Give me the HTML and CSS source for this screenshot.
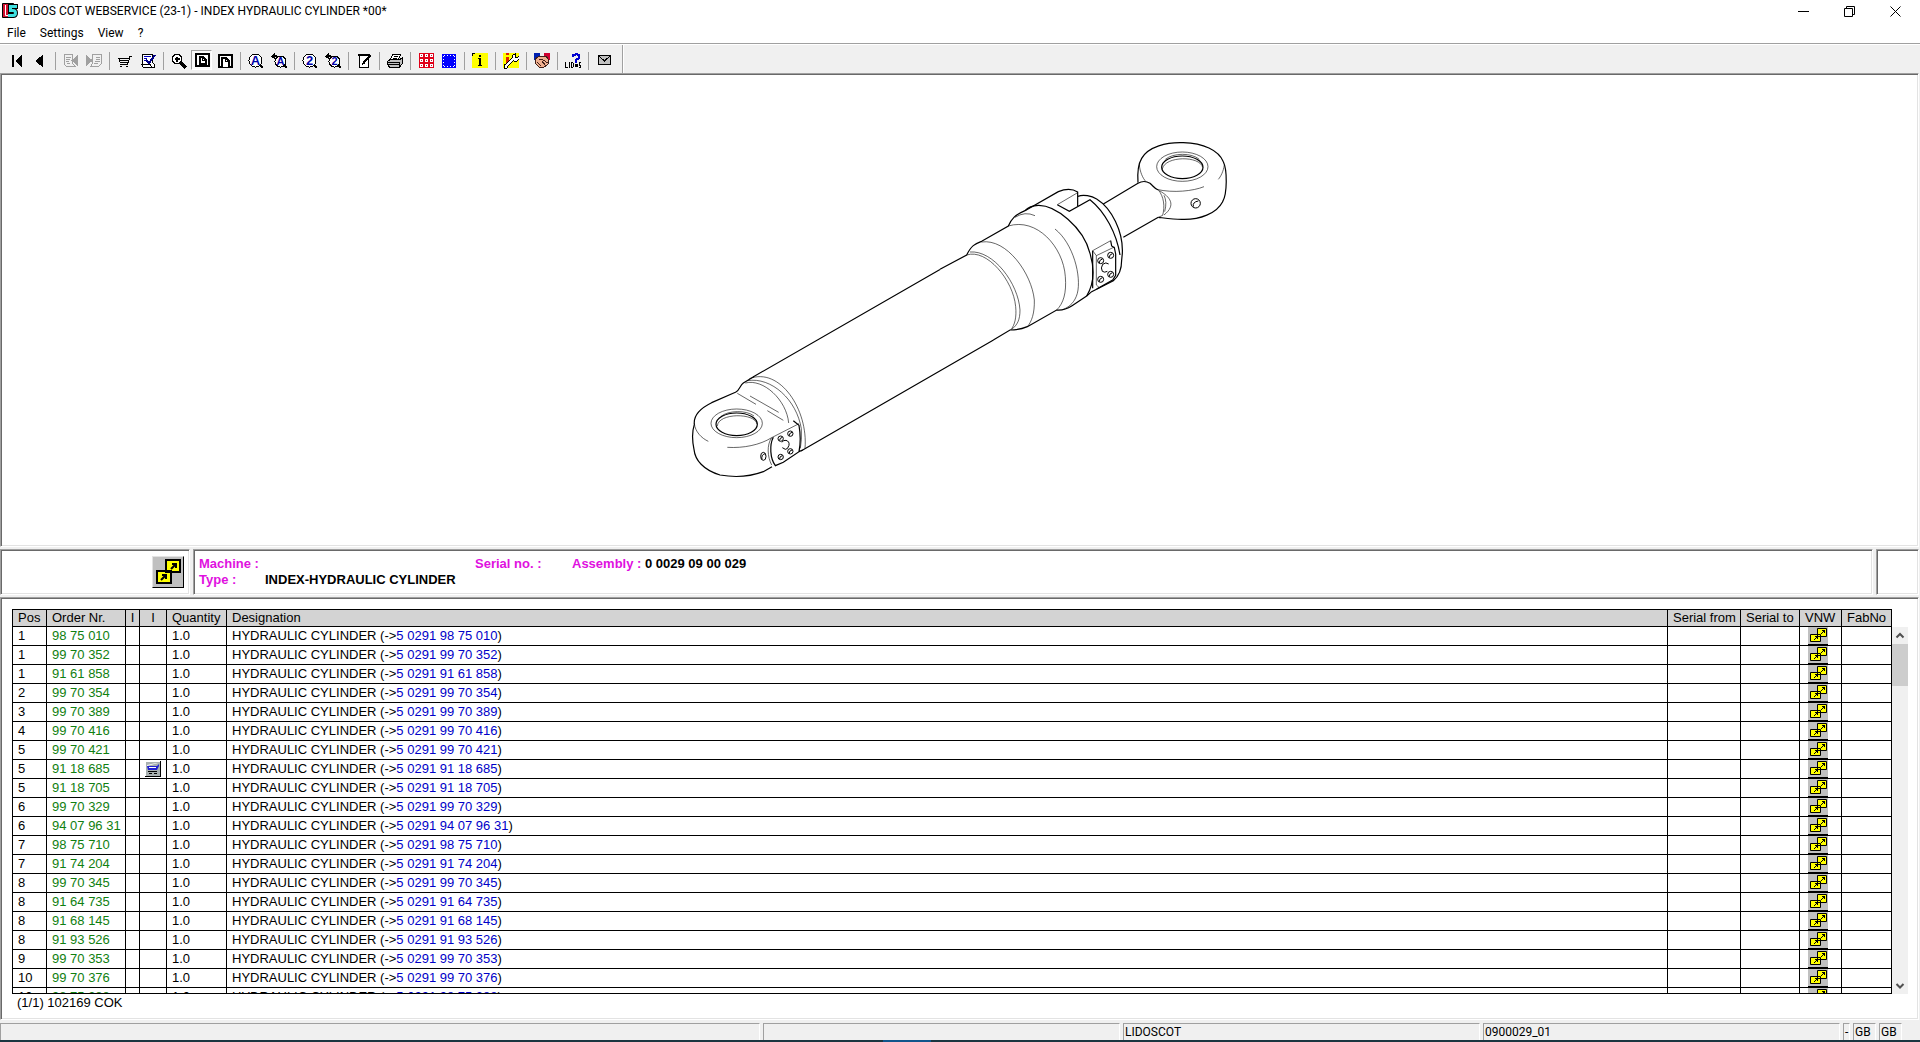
FILE: index.html
```html
<!DOCTYPE html>
<html lang="en">
<head>
  <meta charset="UTF-8" />
  <meta name="viewport" content="width=device-width, initial-scale=1" />
  <title>LIDOS COT WEBSERVICE</title>
  <link rel="stylesheet" href="styles.css">
</head>
<body>
  <!-- Shared symbols -->
  <svg class="symbols" aria-hidden="true">
    <symbol id="link" viewBox="0 0 20 18">
      <path fill="#c0c0c0" d="M0 0h20v17H0z"/>
      <path d="M0 17h20v1H0z"/>
      <path fill="#ff0" stroke="#000" d="M9.500 1.500h9v8h-9zM2.500 7.500h10v7h-10z"/>
      <path d="M14 3h3v3h-1V5h-1v1h-1v1h-1V6h1V5h1V4h-1zM7 9h3v3H9v-1H8v1H7v1H6v-1h1v-1h1v-1H7z"/>
    </symbol>
  </svg>

  <header class="titlebar">
    <svg class="app-icon" viewBox="0 0 16 16">
      <path fill="#d01030" stroke="#000" d="M.5.5h11v14H.5z"/>
      <path fill="none" stroke="#fff" stroke-width="1" d="M3.500 2v10.500H6"/>
      <path fill="none" stroke="#000" stroke-width="5" d="M16 3.500H8.500V7.500H11q2.500 0 2.500 2.500t-2.500 2.500H6"/>
      <path fill="none" stroke="#40e0e0" stroke-width="3" d="M15 3.500H8.500V7.500H11q2.500 0 2.500 2.500t-2.500 2.500H6"/>
    </svg>
    <h1 class="title">LIDOS COT WEBSERVICE (23-1) - INDEX HYDRAULIC CYLINDER *00*</h1>
    <div class="window-buttons">
      <button aria-label="Minimize"><svg viewBox="0 0 11 11"><path d="M0 5.500h11"/></svg></button>
      <button aria-label="Restore"><svg viewBox="0 0 11 11"><path d="M.5 2.500h8v8h-8zM2.500 2.500v-2h8v8h-2"/></svg></button>
      <button aria-label="Close"><svg viewBox="0 0 11 11"><path d="M.5.5l10 10M10.500.5l-10 10"/></svg></button>
    </div>
  </header>

  <nav class="menu">
    <button>File</button>
    <button>Settings</button>
    <button>View</button>
    <button>?</button>
  </nav>

  <div class="toolbar">
    <button aria-label="First"><svg viewBox="0 0 16 16"><path d="M3 2h2v12H3zM13 2v12L6 8z"/></svg></button>
    <button aria-label="Back"><svg viewBox="0 0 16 16"><path d="M10.500 2v12L3 8z"/></svg></button>
    <span class="sep"></span>
    <button aria-label="Previous page" disabled><svg viewBox="0 0 16 16"><path fill="none" stroke="#a0a0a0" d="M1.500 1.500h8v9l3 3h-9l-2-2zM3 4.500h5M3 6.500h4M3 8.500h3M4 10.500h3"/><path fill="#a0a0a0" d="M15 2v11L8 7.500z"/></svg></button>
    <button aria-label="Next page" disabled><svg viewBox="0 0 16 16"><path fill="none" stroke="#a0a0a0" d="M6.500 1.500h9v9l-3 3h-8l2-3zM10 4.500h4M10 6.500h4M9 8.500h5M8 10.500h4"/><path fill="#a0a0a0" d="M0 2v11l7-5.500z"/></svg></button>
    <span class="sep"></span>
    <button aria-label="Basket"><svg viewBox="0 0 16 16"><path fill="none" stroke="#000" d="M15 3.500h-2L10.500 11.500H3M1 5.500h11M2 7.500h9.500M3 9.500h8M1.500 5l2 5"/><path d="M3 13h2v1H3zM9 13h2v1H9z"/></svg></button>
    <button aria-label="Order list"><svg viewBox="0 0 16 16"><path fill="#fff" stroke="#000" d="M2.500 1.500h10v8l2 2v3h-11l-2-3h1z"/><path stroke="#00b" d="M4 3.500h7M4 5.500h3M4 7.500h2"/><path fill="none" stroke="#000088" stroke-width="2" d="M6 7l3 3 6-8"/><path fill="none" stroke="#000" d="M2 11.500h8l2 3"/></svg></button>
    <span class="sep"></span>
    <button aria-label="Zoom in"><svg viewBox="0 0 16 16"><circle cx="6" cy="6" r="4.500" fill="#fff" stroke="#000" stroke-width="1.500"/><path fill="none" stroke="#000" stroke-width="1.500" d="M3.500 6h5M6 3.500v5"/><path stroke="#000" stroke-width="3" d="M10 10l5 5"/></svg></button>
    <button class="pressed" aria-label="Whole page"><svg viewBox="0 0 16 16"><path fill="#fff" stroke="#000" stroke-width="2" d="M2 2h13v12H2z"/><path fill="#fff" stroke="#000" stroke-width="2" d="M6 5h3l3 3v4H6z"/><path fill="none" stroke="#000" d="M8.500 5v3.500H12"/></svg></button>
    <button aria-label="Page width"><svg viewBox="0 0 16 16"><path fill="#fff" stroke="#000" stroke-width="2" d="M2 2h13v12H2z"/><path fill="#fff" stroke="#000" stroke-width="2" d="M5 14V5h4l3 3v6"/><path fill="none" stroke="#000" d="M8.500 5v3.500H12"/></svg></button>
    <span class="sep"></span>
    <button aria-label="Search text"><svg viewBox="0 0 16 16"><circle cx="7.500" cy="7.500" r="6.500" fill="#fff" stroke="#000"/><path stroke="#000" stroke-width="2" d="M12 12l3 3"/><text x="7.500" y="12" font-size="13">A</text></svg></button>
    <button aria-label="Search text again"><svg viewBox="0 0 16 16"><circle cx="9.500" cy="8.500" r="5.500" fill="#fff" stroke="#000"/><path stroke="#000" stroke-width="2" d="M13 12l3 3"/><path d="M0 3.500L3.500 0v2H5l2 2-1 1-2-1v2.500z"/><text x="9.500" y="12" font-size="11">A</text></svg></button>
    <span class="sep"></span>
    <button aria-label="Search number"><svg viewBox="0 0 16 16"><circle cx="7.500" cy="7.500" r="6.500" fill="#fff" stroke="#000"/><path stroke="#000" stroke-width="2" d="M12 12l3 3"/><text x="7.500" y="12" font-size="13">2</text></svg></button>
    <button aria-label="Search number again"><svg viewBox="0 0 16 16"><circle cx="9.500" cy="8.500" r="5.500" fill="#fff" stroke="#000"/><path stroke="#000" stroke-width="2" d="M13 12l3 3"/><path d="M0 3.500L3.500 0v2H5l2 2-1 1-2-1v2.500z"/><text x="9.500" y="12" font-size="11">2</text></svg></button>
    <span class="sep"></span>
    <button aria-label="Note"><svg viewBox="0 0 16 16"><path fill="#fff" stroke="#000" d="M3.500 2.500h9v12h-9z"/><path d="M2 1h12v2H2z"/><path fill="none" stroke="#000" stroke-width="2" d="M14.500 2.500L8 9.500"/><path d="M6 12l1-4 2.500 2z"/></svg></button>
    <span class="sep"></span>
    <button aria-label="Print"><svg viewBox="0 0 16 16"><path fill="#fff" stroke="#000" d="M5.500 1.500h8l-2 5h-8z"/><path stroke="#000" d="M7 3.500h4M6 5.500h4"/><path fill="#c0c0c0" stroke="#000" d="M3 6.500h10l2.500-2v6l-3 3.500h-10l-2-2.500v-3z"/><path stroke="#000" d="M1 9.500h11.500M1 11.500h11.500M12.500 9v5"/></svg></button>
    <span class="sep"></span>
    <button aria-label="Grid"><svg viewBox="0 0 16 16"><path fill="#e00018" d="M1 0h15v15H1z"/><path fill="#fff" d="M2 1h3v3H2zM7 1h3v3H7zM12 1h3v3h-3zM2 6h3v3H2zM7 6h3v3H7zM12 6h3v3h-3zM2 11h3v3H2zM7 11h3v3H7zM12 11h3v3h-3z"/><path fill="#a03040" d="M3 2h1v1H3zM8 2h1v1H8zM13 2h1v1h-1zM3 7h1v1H3zM8 7h1v1H8zM13 7h1v1h-1zM3 12h1v1H3zM8 12h1v1H8zM13 12h1v1h-1z"/></svg></button>
    <button aria-label="Select"><svg viewBox="0 0 16 16"><path fill="#00f" d="M1 1h14v14H1z"/><path fill="none" stroke="#fff" stroke-dasharray="1 2" d="M3 2.500h11M3 13.500h11M2.500 3v11M13.500 3v11"/></svg></button>
    <span class="sep"></span>
    <button aria-label="Information"><svg viewBox="0 0 16 16"><path fill="#ff0" d="M0 0h16v15H0z"/><path d="M0 0h3v1H1v2H0zM7 2h2v2H7zM6 5h3v7h1v1H6v-1h1V6H6z"/></svg></button>
    <span class="sep"></span>
    <button aria-label="Service"><svg viewBox="0 0 16 16"><path fill="#ff0" d="M0 0h16v15H0z"/><path fill="#e02000" d="M3 0h3v2H3zM3 4h3v7H3z"/><path fill="none" stroke="#000" stroke-width="4" d="M3 13l8-8"/><path fill="#fff" stroke="#000" d="M9 5l1-3 2.500-1v3l1.500 1 2-2v3l-2 2h-3zM1 12l2-1 2 2-1 2H1z"/><path fill="none" stroke="#fff" stroke-width="2" d="M3 13l8-8"/></svg></button>
    <span class="sep"></span>
    <button aria-label="Partner"><svg viewBox="0 0 16 16"><path fill="#0020b0" d="M0 0h6v7H0z"/><path fill="#d00030" d="M10 0h6v7h-6z"/><path fill="#f0b090" stroke="#402018" d="M1 6l5-3 3 1 3-1 3 4-1 4-5 4-4-1-4-4z"/><path fill="none" stroke="#402018" d="M5 6l4 1 5 3M3 9l4 4M8 8l3 4"/></svg></button>
    <span class="sep"></span>
    <button aria-label="LIDOS help"><svg viewBox="0 0 16 16"><path fill="none" stroke="#0000d0" stroke-width="2" d="M8 4V2h2l1-1 3 1v3l-3 2v3"/><path d="M10 11h3v3h-3z"/><path fill="none" stroke="#000" d="M.5 9v5.500H3M4.500 9v6M6.500 9.500h1l1 1v3l-1 1h-1zM16 9.500h-2v2.500h1.500v2.500H14"/></svg></button>
    <span class="sep"></span>
    <button aria-label="Mail"><svg viewBox="0 0 16 16"><path fill="#c0c0c0" stroke="#000" d="M2.500 2.500h12v9h-12z"/><path fill="none" stroke="#000" d="M3 3l5.500 5L14 3"/></svg></button>
    <span class="band-end"></span>
  </div>

  <main class="content">
    <section class="panel drawing">
      <svg class="cylinder" viewBox="690 140 540 340" role="img" aria-label="Hydraulic cylinder">
        <!-- tube -->
        <path class="bold" d="M753 377L940 269.500M801 451L993.500 340"/>
        <!-- bottom eye and port -->
        <g transform="translate(680 360) scale(.33333)">
          <g class="heavy">
            <path d="M221 50L190 69C180 76 178 92 168 96L95 128C60 145 40 165 43 193C36 215 36 240 42 268C45 300 70 330 120 345C165 353 210 350 250 335L276 320"/>
            <path d="M280 232C268 255 270 295 286 317L310 307L357 275C362 250 362 225 357 196L340 182M357 275L368 270"/>
            <ellipse cx="170" cy="193" rx="62" ry="34"/>
          </g>
          <g class="thin">
            <path d="M208 56C300 20 385 150 375 265M202 62C275 50 350 120 364 206Q366 240 361 265M196 69C250 55 320 120 326 189"/>
            <ellipse cx="170" cy="190" rx="77" ry="43"/>
            <path d="M112 198C115 158 225 158 231 192M122 170C145 150 200 150 222 168"/>
            <path d="M172 100L228 133M210 108L296 157M262 152L310 181"/>
            <path d="M142 262C190 265 240 255 275 233L357 191M43 190C45 215 65 235 85 244M275 233C260 255 262 290 275 315"/>
          </g>
          <g class="bolts">
            <ellipse cx="250" cy="289" rx="8" ry="12"/><path d="M246 298Q243 285 255 281"/>
            <circle cx="302" cy="236" r="8"/><circle cx="331" cy="221" r="8"/>
            <circle cx="302" cy="291" r="8"/><circle cx="331" cy="274" r="8"/>
            <path d="M299 242Q298 234 307 232M328 227Q327 219 336 217M299 297Q298 289 307 287M328 280Q327 272 336 270"/>
            <path d="M306 247Q309 240 318 241Q329 244 327 256Q323 269 316 268L307 263"/>
          </g>
        </g>
        <!-- head, rod and rod eye -->
        <g transform="translate(940 130) scale(.33333)">
          <g class="heavy">
            <path d="M0 418L80 375C95 345 105 342 125 334L205 288C215 265 225 255 255 242L355 185C380 175 400 178 413 186L413 228M352 224L388 244L450 209C495 245 530 310 540 375"/>
            <path d="M414 199C430 192 455 198 470 207C515 235 550 305 547 370L545 390C545 425 535 440 520 452L455 485L440 498L395 528C380 538 365 541 350 540L262 590C240 600 225 600 210 600L160 630"/>
            <path d="M255 242C265 231 275 227 295 226C345 225 430 290 450 370C465 420 460 465 440 498"/>
            <path d="M490 222L594 160Q612 149 630 160C640 168 645 178 655 180M550 322L655 262"/>
            <path d="M594 158C592 130 596 100 605 85C625 50 680 36 730 38C790 40 835 60 850 95C862 120 862 190 848 215C830 250 780 270 725 268C700 268 680 265 655 262"/>
            <ellipse cx="727" cy="112" rx="62" ry="34"/>
            <path d="M512 332L515 348L523 353L527 372V436L518 450L470 477M458 362V475"/>
          </g>
          <g class="thin">
            <path d="M352 224L413 188M205 288C290 262 370 350 376 440C380 490 370 520 350 540M345 297C400 340 425 440 412 490C405 515 390 530 370 538M225 262Q255 243 285 257"/>
            <path d="M125 336C200 325 275 430 283 510C284 550 275 575 262 590M80 375C140 355 220 450 227 530C230 560 225 585 212 600M90 366C160 360 235 460 240 540C240 570 232 585 215 598"/>
            <ellipse cx="727" cy="110" rx="77" ry="44"/>
            <path d="M667 117C675 77 780 77 788 112M676 88C700 68 755 68 778 88"/>
            <path d="M650 178C700 190 760 183 792 170M598 105C600 125 608 145 618 155M853 105C850 125 842 140 835 148"/>
            <path d="M655 180C672 200 675 230 668 256L655 262M658 182C690 200 710 225 672 255M672 196Q682 215 674 245"/>
            <path d="M458 362L512 332M458 362L469 377L523 351M469 377V465L478 473"/>
          </g>
          <g class="bolts">
            <circle cx="767" cy="220" r="14"/><path d="M760 230Q757 216 775 213"/>
            <circle cx="482" cy="392" r="9"/><circle cx="512" cy="376" r="9"/>
            <circle cx="482" cy="448" r="9"/><circle cx="512" cy="433" r="9"/>
            <path d="M478 399Q477 390 487 387M508 383Q507 374 517 371M478 455Q477 446 487 443M508 440Q507 431 517 428"/>
            <path d="M506 402Q498 395 488 403Q481 414 487 424Q494 429 502 424"/>
          </g>
        </g>
      </svg>
    </section>

    <section class="info">
      <div class="panel info-nav">
        <button class="jump" aria-label="Go to assembly">
          <svg viewBox="0 0 28 28"><path fill="#ff0" stroke="#000" stroke-width="2" d="M12 2h14v12H12zM3 13h14v12H3z"/><path fill="none" stroke="#000" stroke-width="2" d="M17 11l5-5M18 6h4v4M7 22l5-5M8 17h4v4"/></svg>
        </button>
      </div>
      <div class="panel machine">
        <span class="label">Machine :</span>
        <span></span>
        <span class="label">Serial no. :</span>
        <span><span class="label">Assembly :</span> 0 0029 09 00 029</span>
        <span class="label">Type :</span>
        <span>INDEX-HYDRAULIC CYLINDER</span>
      </div>
      <div class="panel"></div>
    </section>

    <section class="panel list">
      <div class="list-body">
        <div class="table-wrap">
          <table>
            <colgroup>
              <col class="c-pos"><col class="c-order"><col class="c-i"><col class="c-basket"><col class="c-qty"><col>
              <col class="c-from"><col class="c-to"><col class="c-vnw"><col class="c-fab">
            </colgroup>
            <thead>
              <tr><th>Pos</th><th>Order Nr.</th><th class="mid">I</th><th class="mid">I</th><th>Quantity</th><th>Designation</th><th>Serial from</th><th>Serial to</th><th>VNW</th><th>FabNo</th></tr>
            </thead>
            <tbody>
              <tr><td>1</td><td class="order">98 75 010</td><td></td><td></td><td>1.0</td><td>HYDRAULIC CYLINDER (-&gt;<a href="#">5 0291 98 75 010</a>)</td><td></td><td></td><td class="icon"><button aria-label="VNW"><svg><use href="#link"/></svg></button></td><td></td></tr>
              <tr><td>1</td><td class="order">99 70 352</td><td></td><td></td><td>1.0</td><td>HYDRAULIC CYLINDER (-&gt;<a href="#">5 0291 99 70 352</a>)</td><td></td><td></td><td class="icon"><button aria-label="VNW"><svg><use href="#link"/></svg></button></td><td></td></tr>
              <tr><td>1</td><td class="order">91 61 858</td><td></td><td></td><td>1.0</td><td>HYDRAULIC CYLINDER (-&gt;<a href="#">5 0291 91 61 858</a>)</td><td></td><td></td><td class="icon"><button aria-label="VNW"><svg><use href="#link"/></svg></button></td><td></td></tr>
              <tr><td>2</td><td class="order">99 70 354</td><td></td><td></td><td>1.0</td><td>HYDRAULIC CYLINDER (-&gt;<a href="#">5 0291 99 70 354</a>)</td><td></td><td></td><td class="icon"><button aria-label="VNW"><svg><use href="#link"/></svg></button></td><td></td></tr>
              <tr><td>3</td><td class="order">99 70 389</td><td></td><td></td><td>1.0</td><td>HYDRAULIC CYLINDER (-&gt;<a href="#">5 0291 99 70 389</a>)</td><td></td><td></td><td class="icon"><button aria-label="VNW"><svg><use href="#link"/></svg></button></td><td></td></tr>
              <tr><td>4</td><td class="order">99 70 416</td><td></td><td></td><td>1.0</td><td>HYDRAULIC CYLINDER (-&gt;<a href="#">5 0291 99 70 416</a>)</td><td></td><td></td><td class="icon"><button aria-label="VNW"><svg><use href="#link"/></svg></button></td><td></td></tr>
              <tr><td>5</td><td class="order">99 70 421</td><td></td><td></td><td>1.0</td><td>HYDRAULIC CYLINDER (-&gt;<a href="#">5 0291 99 70 421</a>)</td><td></td><td></td><td class="icon"><button aria-label="VNW"><svg><use href="#link"/></svg></button></td><td></td></tr>
              <tr><td>5</td><td class="order">91 18 685</td><td></td><td><button class="basket" aria-label="In basket"><svg viewBox="0 0 16 16"><path d="M0 0h16v16H0z"/><path fill="#fff" d="M0 0h15v15H0z"/><path fill="#a8b0b0" d="M1 1h14v14H1z"/><path fill="#fff" d="M2 4l9-2h2L2 5z"/><path fill="#2020d0" d="M2 5h10l2-2v2l-2 4H3z"/><path stroke="#fff" d="M4 6.500h7"/><path d="M3 10h9v1H3zM4 12h3v1H4zM9 12h3v1H9z"/></svg></button></td><td>1.0</td><td>HYDRAULIC CYLINDER (-&gt;<a href="#">5 0291 91 18 685</a>)</td><td></td><td></td><td class="icon"><button aria-label="VNW"><svg><use href="#link"/></svg></button></td><td></td></tr>
              <tr><td>5</td><td class="order">91 18 705</td><td></td><td></td><td>1.0</td><td>HYDRAULIC CYLINDER (-&gt;<a href="#">5 0291 91 18 705</a>)</td><td></td><td></td><td class="icon"><button aria-label="VNW"><svg><use href="#link"/></svg></button></td><td></td></tr>
              <tr><td>6</td><td class="order">99 70 329</td><td></td><td></td><td>1.0</td><td>HYDRAULIC CYLINDER (-&gt;<a href="#">5 0291 99 70 329</a>)</td><td></td><td></td><td class="icon"><button aria-label="VNW"><svg><use href="#link"/></svg></button></td><td></td></tr>
              <tr><td>6</td><td class="order">94 07 96 31</td><td></td><td></td><td>1.0</td><td>HYDRAULIC CYLINDER (-&gt;<a href="#">5 0291 94 07 96 31</a>)</td><td></td><td></td><td class="icon"><button aria-label="VNW"><svg><use href="#link"/></svg></button></td><td></td></tr>
              <tr><td>7</td><td class="order">98 75 710</td><td></td><td></td><td>1.0</td><td>HYDRAULIC CYLINDER (-&gt;<a href="#">5 0291 98 75 710</a>)</td><td></td><td></td><td class="icon"><button aria-label="VNW"><svg><use href="#link"/></svg></button></td><td></td></tr>
              <tr><td>7</td><td class="order">91 74 204</td><td></td><td></td><td>1.0</td><td>HYDRAULIC CYLINDER (-&gt;<a href="#">5 0291 91 74 204</a>)</td><td></td><td></td><td class="icon"><button aria-label="VNW"><svg><use href="#link"/></svg></button></td><td></td></tr>
              <tr><td>8</td><td class="order">99 70 345</td><td></td><td></td><td>1.0</td><td>HYDRAULIC CYLINDER (-&gt;<a href="#">5 0291 99 70 345</a>)</td><td></td><td></td><td class="icon"><button aria-label="VNW"><svg><use href="#link"/></svg></button></td><td></td></tr>
              <tr><td>8</td><td class="order">91 64 735</td><td></td><td></td><td>1.0</td><td>HYDRAULIC CYLINDER (-&gt;<a href="#">5 0291 91 64 735</a>)</td><td></td><td></td><td class="icon"><button aria-label="VNW"><svg><use href="#link"/></svg></button></td><td></td></tr>
              <tr><td>8</td><td class="order">91 68 145</td><td></td><td></td><td>1.0</td><td>HYDRAULIC CYLINDER (-&gt;<a href="#">5 0291 91 68 145</a>)</td><td></td><td></td><td class="icon"><button aria-label="VNW"><svg><use href="#link"/></svg></button></td><td></td></tr>
              <tr><td>8</td><td class="order">91 93 526</td><td></td><td></td><td>1.0</td><td>HYDRAULIC CYLINDER (-&gt;<a href="#">5 0291 91 93 526</a>)</td><td></td><td></td><td class="icon"><button aria-label="VNW"><svg><use href="#link"/></svg></button></td><td></td></tr>
              <tr><td>9</td><td class="order">99 70 353</td><td></td><td></td><td>1.0</td><td>HYDRAULIC CYLINDER (-&gt;<a href="#">5 0291 99 70 353</a>)</td><td></td><td></td><td class="icon"><button aria-label="VNW"><svg><use href="#link"/></svg></button></td><td></td></tr>
              <tr><td>10</td><td class="order">99 70 376</td><td></td><td></td><td>1.0</td><td>HYDRAULIC CYLINDER (-&gt;<a href="#">5 0291 99 70 376</a>)</td><td></td><td></td><td class="icon"><button aria-label="VNW"><svg><use href="#link"/></svg></button></td><td></td></tr>
              <tr><td>10</td><td class="order">98 75 388</td><td></td><td></td><td>1.0</td><td>HYDRAULIC CYLINDER (-&gt;<a href="#">5 0291 98 75 388</a>)</td><td></td><td></td><td class="icon"><button aria-label="VNW"><svg><use href="#link"/></svg></button></td><td></td></tr>
            </tbody>
          </table>
        </div>
        <div class="scrollbar">
          <button aria-label="Scroll up"><svg viewBox="0 0 16 17"><path d="M4.500 10.500L8 7l3.500 3.500"/></svg></button>
          <div class="thumb"></div>
          <button class="down" aria-label="Scroll down"><svg viewBox="0 0 16 17"><path d="M4.500 7L8 10.500 11.500 7"/></svg></button>
        </div>
      </div>
      <p class="count">(1/1) 102169 COK</p>
    </section>
  </main>

  <footer class="statusbar">
    <span class="cell s-message"></span>
    <span class="cell s-field"></span>
    <span class="cell s-field">LIDOSCOT</span>
    <span class="cell s-field">0900029_01</span>
    <span class="cell s-dash">-</span>
    <span class="cell s-lang">GB</span>
    <span class="cell s-lang">GB</span>
  </footer>
  <div class="taskbar"><span class="task"></span></div>
</body>
</html>
```
FILE: styles.css
```css
* {
  box-sizing: border-box;
}
body {
  margin: 0;
  height: 100vh;
  display: flex;
  flex-direction: column;
  overflow: hidden;
  background-color: #f0f0f0;
  color: #000;
  font-family: "Liberation Sans", Arial, sans-serif;
  font-size: 13px;
}
button {
  margin: 0;
  padding: 0;
  border: 0;
  background: none;
  color: inherit;
  font: inherit;
}
svg {
  display: block;
}
.symbols {
  display: none;
}

/* Title and menu */
.titlebar {
  display: flex;
  align-items: center;
  height: 22px;
  padding-left: 2px;
  background-color: #fff;
}
.app-icon {
  width: 16px;
  height: 16px;
}
.title {
  flex: 1;
  margin: 0 0 0 5px;
  font-family: Roboto, sans-serif;
  font-size: 12px;
  font-weight: 400;
  line-height: 22px;
}
.window-buttons {
  display: flex;
  height: 20px;
}
.window-buttons button {
  width: 46px;
  padding-left: 16px;
}
.window-buttons svg {
  width: 11px;
  height: 11px;
  fill: none;
  stroke: #000;
}
.menu {
  display: flex;
  gap: 14px;
  height: 23px;
  padding-left: 7px;
  background-color: #fff;
  border-bottom: 1px solid #fff;
  box-shadow: inset 0 -1px 0 #a0a0a0;
  font-family: Roboto, sans-serif;
  font-size: 12px;
  line-height: 22px;
}

/* Toolbar */
.toolbar {
  display: flex;
  height: 28px;
  padding: 5px 0 0 6px;
}
.toolbar button {
  width: 23px;
  height: 22px;
  padding-left: 3px;
}
.toolbar button.pressed {
  width: 21px;
  height: 20px;
  margin-right: 2px;
  padding-left: 2px;
  background-color: #f8f8f8;
  border: 1px solid #fff;
  border-top-color: #a0a0a0;
  border-left-color: #a0a0a0;
}
.toolbar svg {
  width: 16px;
  height: 16px;
  shape-rendering: crispEdges;
}
.toolbar text {
  fill: #0000a8;
  font-weight: 700;
  text-anchor: middle;
}
.sep {
  width: 1px;
  height: 18px;
  margin: 2px 4px 0 3px;
  background-color: #a0a0a0;
}
.band-end {
  width: 2px;
  height: 28px;
  margin: -5px 0 0 6px;
  background-color: #a0a0a0;
  border-right: 1px solid #fff;
}

/* Panels */
.content {
  flex: 1;
  min-height: 0;
  display: flex;
  flex-direction: column;
  gap: 2px;
  padding-right: 1px;
}
.panel {
  background-color: #fff;
  border: 1px solid #fff;
  border-top-color: #a0a0a0;
  border-left-color: #a0a0a0;
  box-shadow: inset 1px 1px 0 #696969, inset -1px -1px 0 #e3e3e3;
}
.drawing {
  flex: 1;
  min-height: 0;
  display: flex;
  align-items: center;
  justify-content: center;
}
.cylinder {
  width: 540px;
  height: 340px;
  fill: none;
  stroke: #000;
}
.bold {
  stroke-width: 1.2;
}
.heavy {
  stroke-width: 3.6;
}
.thin {
  stroke-width: 1.8;
}
.bolts {
  stroke-width: 3;
}
.info {
  display: grid;
  grid-template-columns: 190px 1fr 43px;
  gap: 3px;
  height: 46px;
}
.info-nav {
  display: flex;
  justify-content: flex-end;
  padding: 6px 5px 0 0;
}
.jump {
  width: 32px;
  height: 32px;
  padding: 1px;
  background-color: #c0c0c0;
  border: 1px solid #e3e3e3;
  border-right-color: #000;
  border-bottom-color: #000;
}
.jump svg {
  width: 28px;
  height: 28px;
}
.machine {
  display: grid;
  grid-template-columns: 66px 210px 97px auto;
  grid-auto-rows: 16px;
  padding: 6px 0 0 5px;
  font-weight: 700;
  line-height: 16px;
  white-space: nowrap;
}
.label {
  color: #e010e0;
}

/* Parts list */
.list {
  padding: 11px 10px 7px 11px;
}
.list-body {
  display: flex;
  height: 385px;
}
.table-wrap {
  flex: 1;
  overflow: hidden;
  border: 1px solid #000;
  border-left: 0;
}
table {
  width: 100%;
  table-layout: fixed;
  border-collapse: separate;
  border-spacing: 0;
}
th, td {
  padding: 0 0 0 5px;
  border-left: 1px solid #000;
  border-bottom: 1px solid #000;
  text-align: left;
  font-weight: 400;
  white-space: nowrap;
}
th {
  height: 17px;
  background-color: #d3d3d3;
  line-height: 16px;
}
td {
  height: 19px;
  line-height: 18px;
}
th.mid {
  padding: 0;
  text-align: center;
}
.c-pos { width: 34px; }
.c-order { width: 79px; }
.c-i { width: 14px; }
.c-basket { width: 27px; }
.c-qty { width: 60px; }
.c-from { width: 73px; }
.c-to { width: 59px; }
.c-vnw { width: 42px; }
.c-fab { width: 50px; }
.order {
  color: #108010;
}
td a {
  color: #0000c8;
  text-decoration: none;
}
td button {
  display: block;
}
td.icon {
  padding-left: 8px;
}
.icon svg {
  width: 20px;
  height: 18px;
}
.basket svg {
  width: 16px;
  height: 16px;
}
.scrollbar {
  display: flex;
  flex-direction: column;
  width: 16px;
  margin-top: 18px;
  background-color: #f0f0f0;
}
.scrollbar button {
  height: 17px;
}
.scrollbar svg {
  width: 16px;
  height: 17px;
  fill: none;
  stroke: #505050;
  stroke-width: 2;
}
.thumb {
  height: 42px;
  background-color: #cdcdcd;
}
.scrollbar .down {
  margin-top: auto;
}
.count {
  margin: 0;
  padding-left: 5px;
  line-height: 18px;
}

/* Status bar */
.statusbar {
  display: flex;
  gap: 3px;
  height: 20px;
  padding: 3px 18px 0 0;
  font-family: Roboto, sans-serif;
  font-size: 12px;
  line-height: 16px;
}
.cell {
  padding-left: 1px;
  border: 1px solid #fff;
  border-top-color: #a0a0a0;
  border-left-color: #a0a0a0;
  border-bottom: 0;
}
.s-message {
  flex: 1;
}
.s-field {
  width: 357px;
}
.s-dash {
  width: 7px;
}
.s-lang {
  width: 23px;
}
.taskbar {
  height: 2px;
  padding-left: 46%;
  background-color: #1a3540;
}
.task {
  display: block;
  width: 48px;
  height: 2px;
  background-color: #10558c;
}
```
